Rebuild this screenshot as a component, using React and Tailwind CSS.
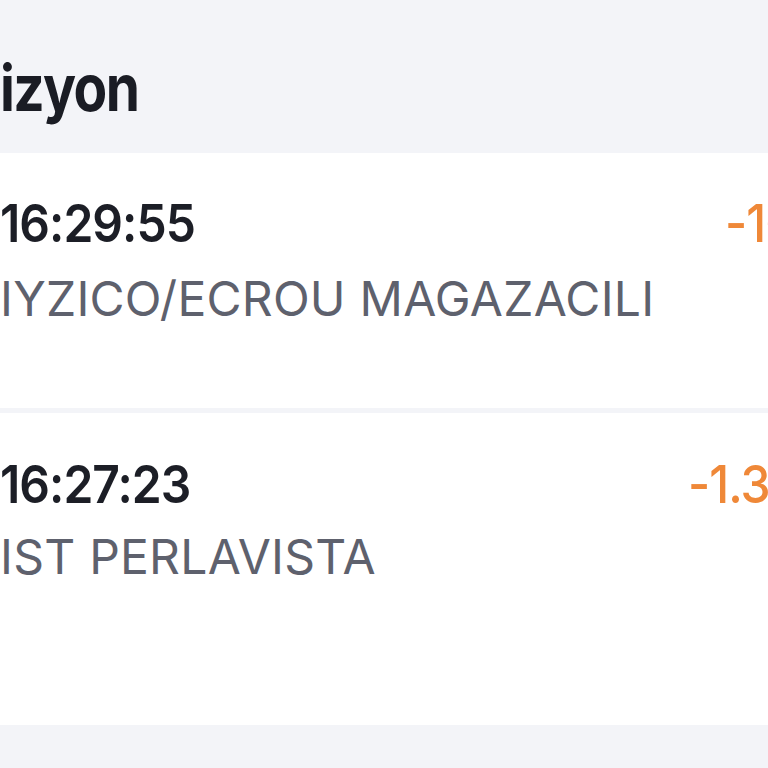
import React from 'react';

const rows = [
  { id: 1, time: '16:29:55', name: 'IYZICO/ECROU MAGAZACILI', amount: '-160,00 TL' },
  { id: 2, time: '16:27:23', name: 'IST PERLAVISTA', amount: '-1.350,00 TL' },
];

function Row({ row, className, nameGap }) {
  return (
    <div className={`bg-white overflow-hidden ${className}`}>
      <div className="flex items-start">
        <div className="flex flex-col shrink-0 w-[688px]">
          <span className="origin-top scale-y-[1.1] text-[48px] leading-none font-semibold text-[#1c1e26] tracking-[-0.02em] whitespace-nowrap">
            {row.time}
          </span>
          <span className={`${nameGap} text-[48px] leading-none font-normal text-[#5e616d] tracking-[0.005em] whitespace-nowrap`}>
            {row.name}
          </span>
        </div>
        <span
          className={`origin-top scale-y-[1.1] text-[48px] leading-none font-medium text-[#ef8838] tracking-[-0.02em] whitespace-nowrap ${row.id === 1 ? 'ml-[37px]' : ''}`}
        >
          {row.amount}
        </span>
      </div>
    </div>
  );
}

export default function App() {
  return (
    <div className="w-[768px] h-[768px] overflow-hidden bg-[#f3f4f8] font-['Inter',sans-serif]">
      {/* başlık */}
      <div className="h-[153px] pt-[56px]">
        <h1 className="origin-top scale-y-[1.17] text-[55px] leading-none font-bold text-[#1a1c24] tracking-[-0.03em]">izyon</h1>
      </div>

      <Row row={rows[0]} className="h-[255px] pt-[44px]" nameGap="mt-[30px]" />
      <div className="h-[5px]" />
      <Row row={rows[1]} className="h-[312px] pt-[45px]" nameGap="mt-[27px]" />
    </div>
  );
}
